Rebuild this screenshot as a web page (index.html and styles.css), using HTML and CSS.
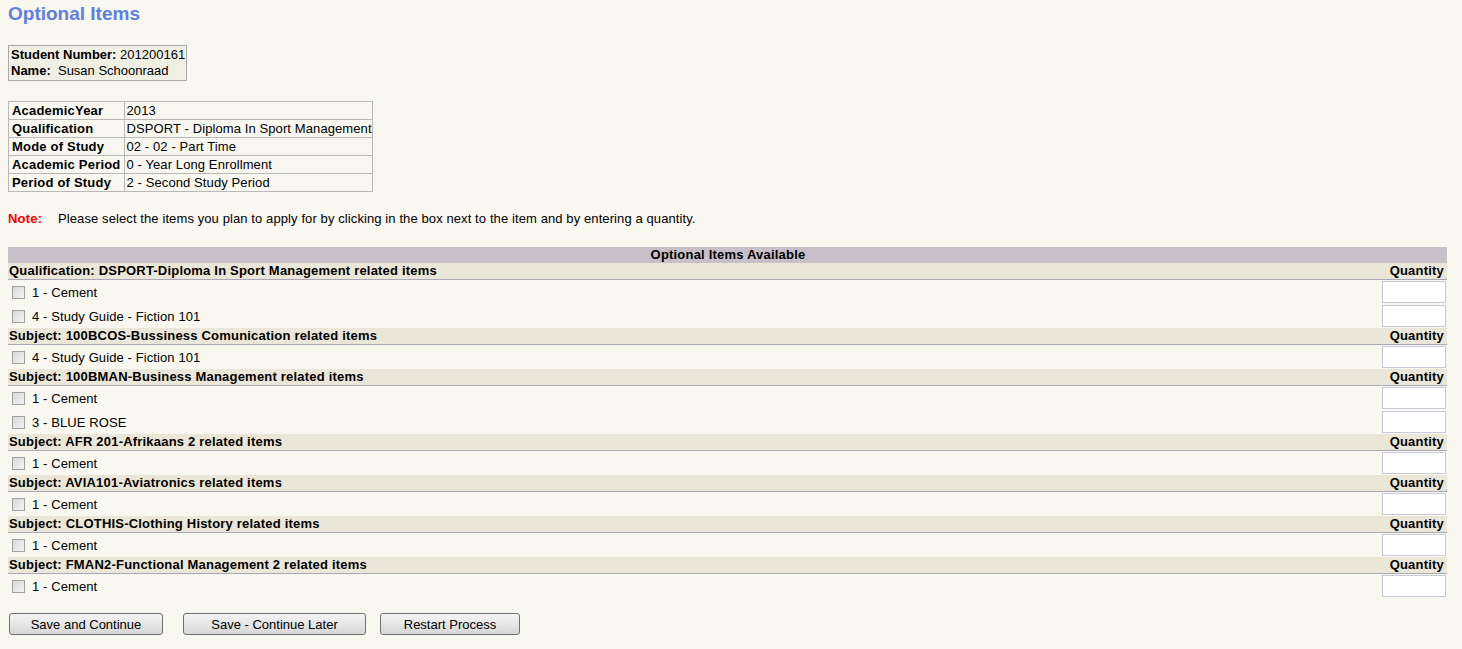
FILE: index.html
```html
<!DOCTYPE html>
<html lang="en">
<head>
    <meta charset="UTF-8">
    <title>Optional Items</title>
    <link rel="stylesheet" href="styles.css">
</head>
<body>
    <h1 class="page-title">Optional Items</h1>

    <div class="student-box">
        <div><b>Student Number:</b> 201200161</div>
        <div><b>Name:</b>&nbsp; Susan Schoonraad</div>
    </div>

    <table class="details">
        <tr><th>AcademicYear</th><td>2013</td></tr>
        <tr><th>Qualification</th><td>DSPORT - Diploma In Sport Management</td></tr>
        <tr><th>Mode of Study</th><td>02 - 02 - Part Time</td></tr>
        <tr><th>Academic Period</th><td>0 - Year Long Enrollment</td></tr>
        <tr><th>Period of Study</th><td>2 - Second Study Period</td></tr>
    </table>

    <p class="note"><span class="note-label">Note:</span>Please select the items you plan to apply for by clicking in the box next to the item and by entering a quantity.</p>

    <form onsubmit="event.preventDefault();">
        <table class="items">
            <tr class="items-title"><td colspan="2">Optional Items Available</td></tr>

            <tr class="group"><td>Qualification: DSPORT-Diploma In Sport Management related items</td><td class="qty-head">Quantity</td></tr>
            <tr class="item"><td><label><input type="checkbox"> 1 - Cement</label></td><td class="qty"><input type="text"></td></tr>
            <tr class="item"><td><label><input type="checkbox"> 4 - Study Guide - Fiction 101</label></td><td class="qty"><input type="text"></td></tr>

            <tr class="group"><td>Subject: 100BCOS-Bussiness Comunication related items</td><td class="qty-head">Quantity</td></tr>
            <tr class="item"><td><label><input type="checkbox"> 4 - Study Guide - Fiction 101</label></td><td class="qty"><input type="text"></td></tr>

            <tr class="group"><td>Subject: 100BMAN-Business Management related items</td><td class="qty-head">Quantity</td></tr>
            <tr class="item"><td><label><input type="checkbox"> 1 - Cement</label></td><td class="qty"><input type="text"></td></tr>
            <tr class="item"><td><label><input type="checkbox"> 3 - BLUE ROSE</label></td><td class="qty"><input type="text"></td></tr>

            <tr class="group"><td>Subject: AFR 201-Afrikaans 2 related items</td><td class="qty-head">Quantity</td></tr>
            <tr class="item"><td><label><input type="checkbox"> 1 - Cement</label></td><td class="qty"><input type="text"></td></tr>

            <tr class="group"><td>Subject: AVIA101-Aviatronics related items</td><td class="qty-head">Quantity</td></tr>
            <tr class="item"><td><label><input type="checkbox"> 1 - Cement</label></td><td class="qty"><input type="text"></td></tr>

            <tr class="group"><td>Subject: CLOTHIS-Clothing History related items</td><td class="qty-head">Quantity</td></tr>
            <tr class="item"><td><label><input type="checkbox"> 1 - Cement</label></td><td class="qty"><input type="text"></td></tr>

            <tr class="group"><td>Subject: FMAN2-Functional Management 2 related items</td><td class="qty-head">Quantity</td></tr>
            <tr class="item"><td><label><input type="checkbox"> 1 - Cement</label></td><td class="qty"><input type="text"></td></tr>
        </table>

        <div class="buttons">
            <button type="submit" class="btn-save">Save and Continue</button>
            <button type="button" class="btn-later">Save - Continue Later</button>
            <button type="button" class="btn-restart">Restart Process</button>
        </div>
    </form>
</body>
</html>
```

FILE: styles.css
```css
body {
    margin: 0;
    padding: 0 8px;
    background: #f8f7f0;
    font-family: "Liberation Sans", Arial, sans-serif;
    font-size: 13px;
    letter-spacing: 0.1px;
    color: #000;
}
b, th, .group td, .items-title td, .note-label {
    letter-spacing: 0.2px;
}
.page-title {
    margin: 3px 0 0;
    font-size: 19px;
    line-height: 22px;
    letter-spacing: 0;
    color: #5f7fe0;
}
.student-box {
    display: inline-block;
    margin-top: 20px;
    padding: 1px 1px 1px 2px;
    border: 1px solid #a8a8a8;
    background: #f0efe4;
    line-height: 16px;
    letter-spacing: 0;
}
.student-box b {
    letter-spacing: 0;
}
.details {
    margin-top: 20px;
    border-collapse: collapse;
    border: 1px solid #a0a0a0;
}
.details th,
.details td {
    border: 1px solid #b8b8b8;
    padding: 0 0 0 3px;
    height: 17px;
    line-height: 17px;
    text-align: left;
    white-space: nowrap;
}
.details th {
    padding-right: 3px;
}
.details td {
    padding-left: 2px;
}
.note {
    margin: 20px 0 0;
    line-height: 14px;
}
.note-label {
    display: inline-block;
    width: 50px;
    color: #ff0000;
    font-weight: bold;
}
.items {
    margin-top: 21px;
    width: 1439px;
    border-collapse: collapse;
}
.items td {
    padding: 0 0 0 1px;
}
.items-title td {
    height: 16px;
    line-height: 16px;
    background: #c8c0c8;
    text-align: center;
    font-weight: bold;
}
.group td {
    height: 16px;
    line-height: 16px;
    background: #ebe7d8;
    border-bottom: 1px solid #a9a9b6;
    font-weight: bold;
}
.group .qty-head {
    text-align: right;
    padding-right: 3px;
}
.item td {
    height: 24px;
}
.item label {
    display: flex;
    align-items: center;
}
.item input[type="checkbox"] {
    appearance: none;
    width: 13px;
    height: 13px;
    margin: 0 7px 0 3px;
    border: 1px solid #a0a0a0;
    background: linear-gradient(135deg, #d8d8d8, #f4f4f4);
}
.qty {
    width: 66px;
    text-align: right;
    padding-right: 1px !important;
}
.qty input {
    display: block;
    margin-left: auto;
    box-sizing: border-box;
    width: 64px;
    height: 22px;
    border: 1px solid #c8c8d8;
    background: #fff;
    padding: 0 2px;
    font-size: 12px;
}
.buttons {
    display: flex;
    gap: 14px;
    margin: 15px 0 0 1px;
}
.buttons button {
    height: 22px;
    padding: 0;
    border: 1px solid #707070;
    border-radius: 3px;
    background: linear-gradient(#f4f4f4, #e6e6e6 50%, #d6d6d6);
    font-family: "Liberation Sans", Arial, sans-serif;
    font-size: 13px;
    color: #000;
    cursor: pointer;
}
.btn-save {
    width: 154px;
    margin-right: 6px;
}
.btn-later {
    width: 183px;
}
.btn-restart {
    width: 140px;
}
```
